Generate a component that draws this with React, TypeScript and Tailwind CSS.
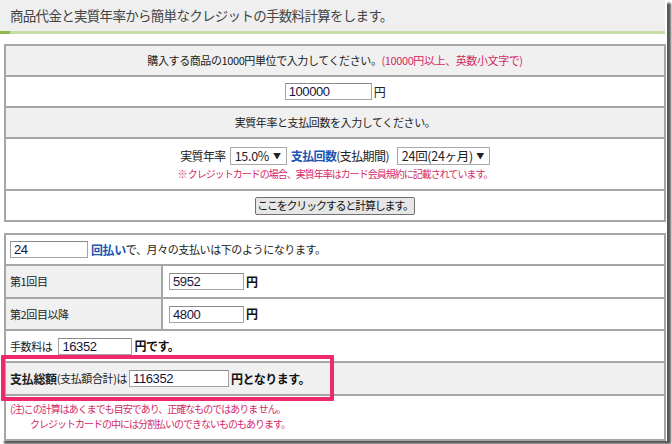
import React from 'react';

const jp = { fontFamily: '"Noto Sans CJK JP", "Noto Sans", sans-serif' };
const num = { fontFamily: '"Liberation Sans", Arial, sans-serif' };

// Plain text box, drawn like an old Windows input
const Field = ({ value, width }: { value: string; width: string }) => (
  <span
    className={`inline-flex items-center h-[17px] ${width} bg-white border border-[#a3a3a3] border-t-[#8a8a8a] pl-[3px] text-[13px] text-[#14143c] leading-none`}
    style={num}
  >
    {value}
  </span>
);

const Select = ({ children, width }: { children: React.ReactNode; width: string }) => (
  <span
    className={`inline-flex items-center justify-between h-[18px] ${width} bg-white border border-[#a8a8a8] pl-[4px] pr-[5px] text-[12.5px] text-[#222] leading-none tracking-[-0.3px]`}
  >
    <span>{children}</span>
    <span className="text-[8px] text-[#222]">▼</span>
  </span>
);

const Yen = ({ children }: { children: React.ReactNode }) => (
  <span className="font-bold text-[12px] text-[#111] ml-[2px] tracking-[-0.5px]">{children}</span>
);

export default function App() {
  return (
    <div className="relative w-[672px] h-[444px] bg-white overflow-hidden" style={jp}>
      <div className="w-[667px] h-[441px] bg-white shadow-[4px_3px_2px_rgba(0,0,0,0.65)] flex flex-col">
        {/* Title */}
        <div className="h-[31px] w-[665px] bg-[#efefef] pl-[10px] flex items-center text-[13.5px] text-[#444] tracking-[-0.7px]">
          商品代金と実質年率から簡単なクレジットの手数料計算をします。
        </div>
        <div className="h-[3px] w-[665px] flex">
          <div className="w-[10px] bg-[#8cba4c]" />
          <div className="flex-1 bg-[#c8dda5]" />
        </div>

        {/* Input table */}
        <div className="mt-[10px] ml-[4px] w-[662px] border-2 border-[#a6a6a6] flex flex-col text-[11px] text-[#222] tracking-[-0.4px]">
          <div className="h-[29px] bg-[#f0f0f0] flex items-center justify-center">
            購入する商品の1000円単位で入力してください。
            <span className="text-[#d42a68]">(10000円以上、英数小文字で)</span>
          </div>
          <div className="h-[31px] border-t-2 border-[#a6a6a6] flex items-center justify-center">
            <Field value="100000" width="w-[87px]" />
            <span className="ml-[2px] text-[12px]">円</span>
          </div>
          <div className="h-[31px] border-t-2 border-[#a6a6a6] bg-[#f0f0f0] flex items-center justify-center">
            実質年率と支払回数を入力してください。
          </div>
          <div className="h-[52px] border-t-2 border-[#a6a6a6] flex flex-col items-center justify-center">
            <div className="flex items-center text-[12px] tracking-[-0.6px]">
              <span className="mr-[4px]">実質年率</span>
              <Select width="w-[57px]">15.0%</Select>
              <span className="ml-[4px] text-[#1b55b2] font-bold">支払回数</span>
              <span>(支払期間)</span>
              <span className="ml-[8px]">
                <Select width="w-[93px]">24回(24ヶ月)</Select>
              </span>
            </div>
            <div className="mt-[2px] text-[10px] text-[#d42a68] tracking-[-1px] leading-[14px]">
              ※ クレジットカードの場合、実質年率はカード会員規約に記載されています。
            </div>
          </div>
          <div className="h-[31px] border-t-2 border-[#a6a6a6] flex items-center justify-center">
            <button className="h-[18px] w-[160px] bg-[#e6e6e6] border border-[#707070] rounded-[2px] text-[11px] text-[#111] tracking-[-1.2px] leading-none">
              ここをクリックすると計算します。
            </button>
          </div>
        </div>

        {/* Result table */}
        <div className="mt-[11px] ml-[4px] w-[662px] border-2 border-[#a6a6a6] flex flex-col text-[11px] text-[#222] tracking-[-0.4px]">
          <div className="h-[29px] flex items-center pl-[4px]">
            <Field value="24" width="w-[78px]" />
            <span className="ml-[3px] text-[#1b55b2] font-bold text-[12px]">回払い</span>
            <span>で、月々の支払いは下のようになります。</span>
          </div>
          <div className="h-[33px] border-t-2 border-[#a6a6a6] flex">
            <div className="w-[157px] bg-[#f0f0f0] flex items-center pl-[4px] border-r-2 border-[#a6a6a6]">第1回目</div>
            <div className="flex-1 flex items-center pl-[6px]">
              <Field value="5952" width="w-[75px]" />
              <Yen>円</Yen>
            </div>
          </div>
          <div className="h-[32px] border-t-2 border-[#a6a6a6] flex">
            <div className="w-[157px] bg-[#f0f0f0] flex items-center pl-[4px] border-r-2 border-[#a6a6a6]">第2回目以降</div>
            <div className="flex-1 flex items-center pl-[6px]">
              <Field value="4800" width="w-[75px]" />
              <Yen>円</Yen>
            </div>
          </div>
          <div className="h-[32px] border-t-2 border-[#a6a6a6] flex items-center pl-[4px]">
            <span className="mr-[6px]">手数料は</span>
            <Field value="16352" width="w-[74px]" />
            <Yen>円です。</Yen>
          </div>
          <div className="h-[33px] border-t-2 border-[#a6a6a6] bg-[#f0f0f0] flex items-center pl-[4px]">
            <span className="font-bold text-[12px] tracking-[-0.3px]">支払総額</span>
            <span className="mr-[2px]">(支払額合計)は</span>
            <Field value="116352" width="w-[100px]" />
            <Yen>円となります。</Yen>
          </div>
          <div className="h-[45px] border-t-2 border-[#a6a6a6] pl-[4px] pt-[5px] text-[10px] text-[#d42a68] tracking-[-1px] leading-[15px]">
            <div>(注)この計算はあくまでも目安であり、正確なものではありま せん。</div>
            <div className="pl-[20px]">クレジットカードの中には分割払いのできないものもあります。</div>
          </div>
        </div>
      </div>

      {/* Highlight frame */}
      <div className="absolute left-[1px] top-[355px] w-[333px] h-[46px] border-[4px] border-[#ee2a6c] rounded-[1px] pointer-events-none" />
    </div>
  );
}
